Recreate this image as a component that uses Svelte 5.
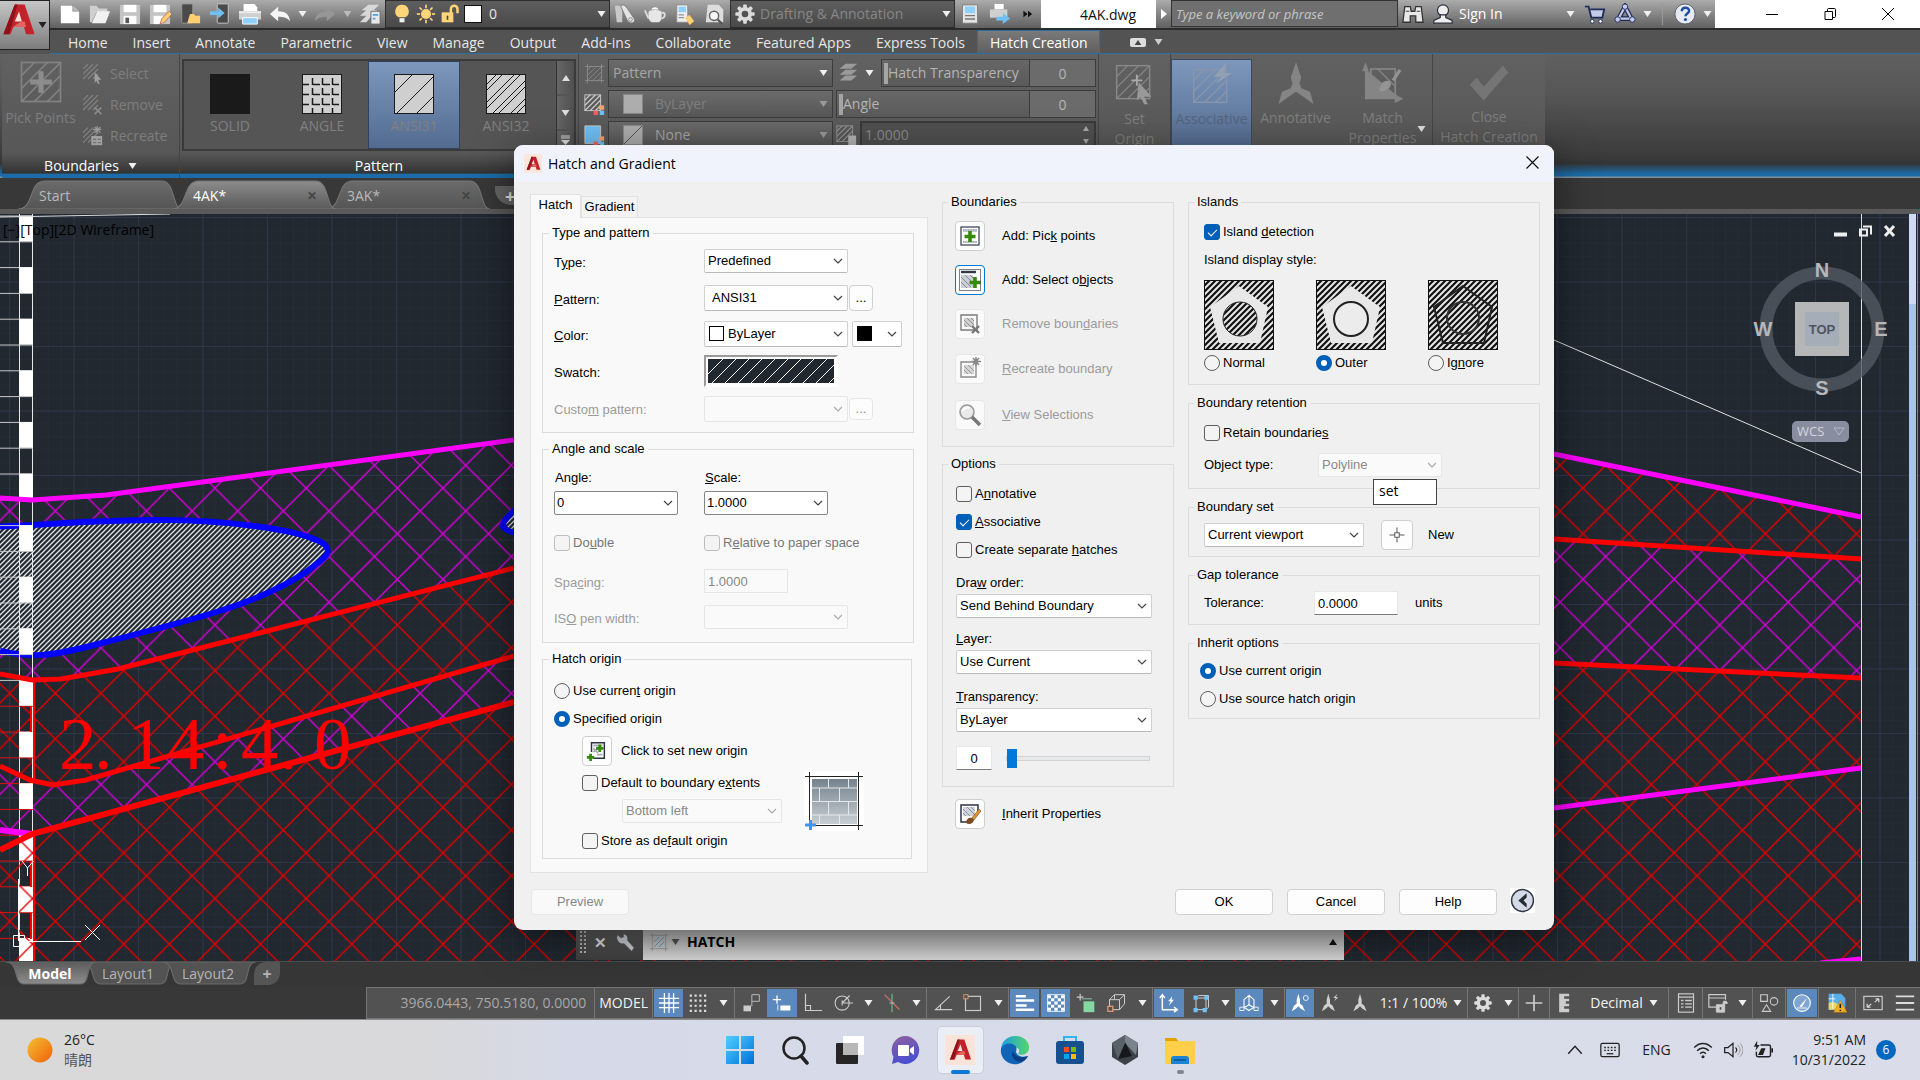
<script>
  const gearTeeth = Array.from({ length: 8 }, (_, i) => `<rect x="10" y="1.5" width="4" height="6" rx="1" transform="rotate(${i * 45} 12 12)"/>`).join('');
  const gear = `<g fill="#dcdcdc">${gearTeeth}</g><circle cx="12" cy="12" r="5.6" fill="none" stroke="#dcdcdc" stroke-width="4"/>`;
  const sunRays = Array.from({ length: 8 }, (_, i) => `<path d="M12 1v4" transform="rotate(${i * 45} 12 12)"/>`).join('');
  const diag = (c, w = 1) => `<path d="M3 9l6-6M3 15l12-12M3 21L21 3M9 21l12-12M15 21l6-6" stroke="${c}" stroke-width="${w}" fill="none"/>`;

  const icons = {
    doc: '<path d="M2 3h13l7 6v13H2z" fill="#fff"/><path d="M15 2v7h8z" fill="#bbb" stroke="#777" stroke-width=".6"/>',
    open: '<path d="M1 21V3h7l3 3h9v4H8L3 21z" fill="#cfcfcf"/><path d="M3 22L9 9h14l-5 13z" fill="#f1f1f1"/>',
    save: '<path d="M1 2h22v21H1z" fill="#c4c4c4"/><path d="M5 2h14v8H5z" fill="#fff"/><path d="M5 14h14v9H5z" fill="#fff"/><path d="M7 16h4v6H7z" fill="#555"/>',
    saveas: '<path d="M1 2h22v21H1z" fill="#c4c4c4"/><path d="M5 2h14v8H5z" fill="#fff"/><path d="M5 14h10v9H5z" fill="#fff"/><path d="M12 23l2-6 8-8 3 3-8 9z" fill="#ffcf70" stroke="#a55" stroke-width=".8"/>',
    mopen: '<rect x="3" y="1" width="12" height="21" rx="1" fill="#4a4a4a" stroke="#999"/><path d="M9 22l3-10h4l2 2h5v8z" fill="#ffcf70"/>',
    msave: '<rect x="9" y="1" width="12" height="21" rx="1" fill="#4a4a4a" stroke="#ccc"/><path d="M1 9h9V5l7 6-7 6v-4H1z" fill="#6fc0f5"/>',
    print: '<path d="M5 1h12l3 4v4H5z" fill="#fff"/><path d="M0 9h24v9H0z" fill="#d0d0d0"/><path d="M0 9h24v2H0z" fill="#eee"/><path d="M4 16h16v7H4z" fill="#8fd0ff" stroke="#fff"/>',
    undo: '<path d="M1 12L10 4v5c8 0 12 3 13 11-3-4-7-5-13-5v5z" fill="#f5f5f5"/>',
    redo: '<path d="M23 12L14 4v5C6 9 2 12 1 20c3-4 7-5 13-5v5z" fill="#969696"/>',
    layers: '<path d="M10 2h12l-6 6H3zM8 8h12l-6 6H1zM8 14h6l-6 7H1z" fill="#d8d8d8"/><path d="M13 9h10v14H13z" fill="#e8e8e8" stroke="#666"/><path d="M15 12h6v2h-6zM15 16h3v2h-3z" fill="#4aa3e0"/>',
    bulb: '<path d="M12 1a8 8 0 0 0-4 15h8A8 8 0 0 0 12 1z" fill="#ffd577"/><path d="M9 17h6v5H9z" fill="#eee"/>',
    sun: `<circle cx="12" cy="12" r="6" fill="#ffd577"/><g stroke="#ffd577" stroke-width="2">${sunRays}</g>`,
    lock: '<path d="M2 10h14v12H2z" fill="#ffd577"/><path d="M13 11V6a4 4 0 0 1 8 0v5" fill="none" stroke="#ffd577" stroke-width="3"/><path d="M8 14h2v5H8z" fill="#444"/>',
    paint: '<path d="M1 3h8v18H3z" fill="#c9c9c9"/><path d="M7 3c5-3 6 1 15 14 2 5-4 6-7 3z" fill="#e4e4e4" stroke="#777"/><circle cx="18" cy="18" r="2" fill="none" stroke="#888"/>',
    teapot: '<path d="M5 10c0-3 14-3 14 0 1 8-1 10-3 11H9c-3-1-5-4-4-11z" fill="#e6e6e6"/><path d="M5 17L1 8M19 11c5-2 5 5 0 6" stroke="#ddd" stroke-width="2" fill="none"/><path d="M8 7c2-3 6-3 8 0z" fill="#fff"/>',
    sheet: '<path d="M3 2h12v19H3z" fill="#eee" stroke="#888"/><path d="M5 4h8v6H5z" fill="#8fd0ff"/><path d="M5 13h6M5 16h6" stroke="#777"/><path d="M12 16l5-3 5 7-5 4z" fill="#ffcf70"/>',
    preview: '<path d="M4 2h12l5 5v14H2z" fill="#ddd"/><circle cx="11" cy="14" r="5" fill="#f8f8f8" stroke="#666" stroke-width="1.6"/><path d="M15 18l5 5" stroke="#555" stroke-width="2.4"/>',
    gear,
    calc: '<path d="M3 1h18v22H3z" fill="#e4e4e4" stroke="#777"/><path d="M6 3h12v8H6z" fill="#8fd0ff"/><path d="M6 14h12M6 18h12" stroke="#777" stroke-width="1.6"/>',
    plot: '<path d="M6 1h10v6H6z" fill="#fff"/><path d="M1 7h19v9H1z" fill="#d0d0d0"/><path d="M8 15h7v-4l8 6-8 6v-4H8z" fill="#6fc0f5"/>',
    more: '<path d="M1 4l10 8-10 8zM12 4l10 8-10 8z" fill="#111"/>',
    bino: '<path d="M3 4h6l1 5h4l1-5h6l2 17h-8v-7h-6v7H1z" fill="#e8e8e8" stroke="#333" stroke-width="1.4"/><path d="M4 9h4M16 9h4" stroke="#333"/>',
    user: '<circle cx="12" cy="8" r="6" fill="#eee" stroke="#2b2f3d" stroke-width="1.3"/><path d="M9 13h6v3l7 3v3H2v-3l7-3z" fill="#eee" stroke="#2b2f3d" stroke-width="1.3"/>',
    cart: '<path d="M1 4h4l3 12h12l2-9H7" fill="#c4cbe8" stroke="#1e2a5a" stroke-width="2"/><circle cx="9" cy="20" r="2" fill="#fff" stroke="#1e2a5a"/><circle cx="18" cy="20" r="2" fill="#fff" stroke="#1e2a5a"/>',
    a360: '<path d="M12 4l7 13H5z" fill="none" stroke="#1e2a5a" stroke-width="5"/><path d="M12 4l7 13H5z" fill="none" stroke="#c4cbe8" stroke-width="2.4"/><circle cx="12" cy="4" r="3" fill="#c4cbe8" stroke="#1e2a5a"/><circle cx="4" cy="18" r="3" fill="#c4cbe8" stroke="#1e2a5a"/><circle cx="20" cy="18" r="3" fill="#c4cbe8" stroke="#1e2a5a"/>',
    help: '<circle cx="12" cy="12" r="11" fill="#e8eaf2" stroke="#555b70"/><path d="M8.500 9c0-5 8-5 8-.5 0 3-4 3-4 6" stroke="#1d4fa0" stroke-width="2.600" fill="none"/><circle cx="12.500" cy="18" r="1.700" fill="#1d4fa0"/>',
    pickpoints: `<rect x="3" y="3" width="18" height="18" fill="none" stroke="#828282" stroke-width=".8"/>${diag('#828282', 0.8)}<path d="M12 7v10M7 12h10" stroke="#8c8c8c" stroke-width="2.400"/>`,
    rselect: `<g transform="translate(-3 -3)">${diag('#858585', 1.3)}</g><path d="M14 10l8 9h-4l2 5-2 0-2-4-2 3z" fill="#a0a0a0"/>`,
    rremove: `<g transform="translate(-3 -3)">${diag('#858585', 1.3)}</g><path d="M14 15l8 8M22 15l-8 8" stroke="#8c8c8c" stroke-width="2"/>`,
    rrecreate: `<g transform="translate(-3 -1)">${diag('#858585', 1.3)}</g><path d="M17 0v9M12 4h10M14 1l7 7M21 1l-7 7" stroke="#9a9a9a" stroke-width="1.400"/><path d="M10 12h13v11H10z" fill="#a0a0a0"/><path d="M12 16h4M12 20h4M18 16h3M18 20h3" stroke="#555"/>`,
    hatchtype: `<path d="M1 4h22M1 20h22M4 1v22M20 1v22" stroke="#8a8a8a"/>${diag('#8a8a8a', 1)}`,
    hatchcolor: `<g transform="translate(-2 -2)">${diag('#d0d0d0', 1.6)}<rect x="3" y="3" width="18" height="18" fill="none" stroke="#d0d0d0"/></g><path d="M17 13h6v5h-6z" fill="#f0a470"/><path d="M11 19h5v5h-5z" fill="#f06060"/><path d="M18 19h5v5h-5z" fill="#6fc0f5"/>`,
    bgcolor: '<path d="M1 1h18v20H1z" fill="#6fc0f5" stroke="#ccc"/><path d="M17 13h6v5h-6z" fill="#f0a470"/><path d="M11 19h5v5h-5z" fill="#f06060"/><path d="M18 19h5v5h-5z" fill="#6fc0f5"/>',
    stack: '<path d="M9 1h14l-7 6H2zM9 8h14l-7 6H2zM9 15h14l-7 6H2z" fill="#9a9a9a"/>',
    hatchscale: `<g transform="translate(-2 -2)">${diag('#999', 1.2)}<rect x="3" y="3" width="18" height="18" fill="none" stroke="#999"/></g><path d="M14 12h9v12H14z" fill="#b5b5b5"/>`,
    setorigin: `<rect x="2" y="2" width="18" height="18" fill="none" stroke="#888" stroke-width=".8"/><g transform="translate(-1 -1)">${diag('#888', 0.7)}</g><path d="M13 7v6M10 10h6" stroke="#aaa"/><path d="M14 11l7 8h-4l2 4h-2l-2-4-2 2z" fill="#999"/>`,
    assoc: `<rect x="2" y="4" width="18" height="18" fill="none" stroke="#8796ad" stroke-width=".8"/><g transform="translate(-1 1)">${diag('#8796ad', 0.8)}</g><path d="M20 0l-7 8h4l-3 4 9-6h-4z" fill="#93a0b4"/>`,
    annot: '<path d="M12 0l3 9-1 3 1 3 5 2 2 7-7-5-3-2-3 2-7 5 2-7 5-2 1-3-1-3z" fill="#858585"/>',
    match: `<path d="M2 4v17h20M2 1l-1.500 4h3zM23 21l-4-2v4z" fill="#858585" stroke="#858585" stroke-width=".6"/><rect x="5" y="4" width="14" height="15" fill="none" stroke="#858585"/><path d="M5 8l11 11M5 13l6 6M9 4l10 10" stroke="#858585" stroke-width=".7"/><path d="M10 17c0-5 3-7 6-6 2 3-2 6-6 6zM17 10l4-6 1.500 1-4 6z" fill="#949494"/>`,
    check: '<path d="M1 13l4-4 4 5L20 2l3 4L9 22z" fill="#757575"/>',
    grid: '<path d="M7 1v22M12 1v22M17 1v22M1 7h22M1 12h22M1 17h22" stroke="#fff" stroke-width="1.400"/>',
    dots: '<path d="M3 4h18M3 9.500h18M3 15h18M3 20.500h18" stroke="#ddd" stroke-width="2.400" stroke-dasharray="2.400 2.800"/>',
    infer: '<path d="M13 2h9v8h-9zM13 10v6" fill="none" stroke="#ccc"/><path d="M3 15h9v7H3z" fill="#ccc"/>',
    dyn: '<path d="M6 3v10M1 8h10" stroke="#fff" stroke-width="1.600"/><path d="M10 15h12v6H10z" fill="#fff"/><path d="M7 14v7" stroke="#fff"/>',
    ortho: '<path d="M3 1v20h20M3 15h6v6" fill="none" stroke="#ccc" stroke-width="1.400"/>',
    polar: '<circle cx="11" cy="12" r="8.500" fill="none" stroke="#ccc" stroke-width="1.300"/><path d="M11 12h13M11 12l9-9M11 9v6" stroke="#ccc" stroke-width="1.300" fill="none"/>',
    iso: '<path d="M12 1v22" stroke="#6bbf83" stroke-width="1.400"/><path d="M3 2l18 18" stroke="#d07070" stroke-width="1.400"/><path d="M9 12h6" stroke="#ccc"/>',
    otrack: '<path d="M20 4L3 20h20M9 14v6" fill="none" stroke="#ccc" stroke-width="1.400"/>',
    osnap: '<rect x="3" y="4" width="18" height="17" fill="none" stroke="#ccc" stroke-width="1.400"/><rect x="1" y="2" width="5" height="5" fill="#535353" stroke="#f0a070"/>',
    lw: '<path d="M1 4h12M1 9h22M1 15h13M1 20h22" stroke="#fff" stroke-width="3"/>',
    transp: '<rect x="2" y="2" width="20" height="20" fill="none" stroke="#fff"/><path d="M2 4.500h20M2 12h20M2 19.500h20" stroke="#fff" stroke-width="3.600" stroke-dasharray="4 4"/><path d="M6 8.200h16M6 15.800h16" stroke="#fff" stroke-width="3.600" stroke-dasharray="4 4"/>',
    selcyc: '<path d="M5 1v8M1 5h8" stroke="#ccc" stroke-width="1.400"/><path d="M7 7h12" stroke="#9ad8b4"/><path d="M9 10h13v13H9z" fill="#85d8a2"/>',
    osnap3: '<path d="M3 8l6-6h12v11l-6 7H3zM3 8h12v12M15 8l6-6M9 2v5" fill="none" stroke="#ccc" stroke-width="1.200"/><rect x="1" y="16" width="6" height="6" fill="#535353" stroke="#f0a070" stroke-width="1.400"/>',
    ducs: '<path d="M4 2v18h18M1 6l3-4 3 4M18 17l4 3-4 3" fill="none" stroke="#fff" stroke-width="1.700"/><path d="M16 4l-5 6h3l-2 5 6-7h-3z" fill="#fff"/>',
    filter: '<path d="M6 6h12v14H6zM6 6l3-3h12v14l-3 3" fill="none" stroke="#ccc" stroke-width="1.200"/><path d="M3 3h5v5H3zM16 3h5v5h-5zM3 18h5v5H3zM14 18h5v5h-5z" fill="#6fc0f5"/>',
    gizmo: '<path d="M12 2v12M12 14l-8 5M12 14l8 5M6 8l6-5 6 5v9l-6 4-6-4z" fill="none" stroke="#fff" stroke-width="1.300"/><path d="M1 17h5v4H1zM18 17h5v4h-5z" fill="#5b89bd" stroke="#fff"/>',
    av: '<path d="M10 1l2 7 0 5 3 2 3 7-5-3-3-3-3 3-5 3 3-7 3-2V8z" fill="#fff"/><circle cx="19" cy="6" r="3" fill="none" stroke="#fff"/>',
    av2: '<path d="M10 1l2 7 0 5 3 2 3 7-5-3-3-3-3 3-5 3 3-7 3-2V8z" fill="#d0d0d0"/><path d="M21 1l-5 5h3l-2 4 5-5h-3z" fill="#d0d0d0"/>',
    av3: '<path d="M12 1l2 7 0 5 3 2 3 7-5-3-3-3-3 3-5 3 3-7 3-2V8z" fill="#d0d0d0"/>',
    plus: '<path d="M12 2v20M2 12h20" stroke="#ccc" stroke-width="2"/>',
    ruler: '<path d="M5 1h12v3h-6v3h6v3h-4v3h4v3h-6v3h6v4H5z" fill="#ccc"/>',
    qp: '<rect x="3" y="1" width="18" height="22" fill="none" stroke="#ccc" stroke-width="1.400"/><path d="M3 5h18M6 9h3M6 13h3M6 17h3M11 9h8M11 13h8M11 17h8" stroke="#ccc" stroke-width="1.600"/>',
    lockui: '<path d="M10 17H1V2h20v6M1 6h20" fill="none" stroke="#ccc" stroke-width="1.400"/><path d="M10 14h10v9H10zM18 14v-3a3 3 0 0 1 5 0v2" fill="#ccc" stroke="#ccc"/><path d="M14 17h2v3h-2z" fill="#444"/>',
    isolate: '<path d="M2 2h8v8H2zM9 14l5 8H4z" fill="none" stroke="#ccc" stroke-width="1.300"/><circle cx="18" cy="10" r="4.500" fill="none" stroke="#ccc" stroke-width="1.300"/>',
    perf: '<circle cx="12" cy="12" r="10" fill="#7fa6d2" stroke="#fff" stroke-width="1.300"/><path d="M9 16l9-10-6 11z" fill="#fff"/><path d="M6 18h12" stroke="#fff"/>',
    warn: '<path d="M2 1h15l5 5v14H2z" fill="#58aee8"/><path d="M2 12c5-3 10 0 12 3v5H2z" fill="#e8d66a"/><path d="M7 1v18M2 7h8" stroke="#fff"/><path d="M16 9l8 14H8z" fill="#f5b021" stroke="#b07800" stroke-width=".6"/><path d="M16 13v5M16 20v1.500" stroke="#222" stroke-width="2"/>',
    clean: '<rect x="1" y="4" width="22" height="16" fill="none" stroke="#ccc" stroke-width="1.400"/><path d="M14 11l5-4M19 7h-4M19 7v4M10 13l-5 4M5 17h4M5 17v-4" stroke="#ddd" stroke-width="1.400"/>',
    burger: '<path d="M1 4h22M1 12h22M1 20h22" stroke="#ddd" stroke-width="2.200"/>',
    acad: '<path d="M1 22L9 1h7l7 21h-6l-1.500-5H8l-2 5z" fill="#c4222a"/><path d="M12 6l-3 7h5z" fill="#f6e4de"/><path d="M1 22L9 1h2L5 22z" fill="#8d1219"/><path d="M8 17c3-3 5-4 8-4l1 4z" fill="#e2675f"/>',
    addpick: '<rect x="3" y="3" width="18" height="18" fill="#fff" stroke="#333a4a" stroke-width="1.200"/><path d="M5 5h14v3H5zM5 17h14v2H5z" fill="#c3c8d2"/><path d="M5 6h14M5 18h14" stroke="#8a91a0" stroke-dasharray="1 1.500"/><path d="M12 7v11M6.500 12.500h11" stroke="#35890c" stroke-width="3.600"/>',
    addsel: '<path d="M3 4h15" stroke="#333a4a" stroke-width="2.400"/><path d="M3 7h12l1 4v9H3z" fill="#ccd0d6"/><path d="M3 9l10 10M3 14l6 6M7 7l9 9M12 7l5 5" stroke="#858c98"/><path d="M17 9v11M11.500 14.500h11" stroke="#35890c" stroke-width="3.600"/><rect x="1.500" y="1.500" width="21" height="21" fill="none" stroke="#000" stroke-dasharray="1 1"/>',
    rmb: '<path d="M3 3h16v15H3z" fill="#fafafa" stroke="#7c7c7c" stroke-width="1.400"/><path d="M6 6h10v9H6z" fill="#d0d0d0"/><path d="M6 8l7 7M6 12l3 3M9 6l7 7M13 6l3 3" stroke="#8f8f8f"/><path d="M14 14l7 7M21 14l-7 7" stroke="#777" stroke-width="2.400"/>',
    rcb: '<path d="M3 5h15v15H3z" fill="#fafafa" stroke="#8a8a8a" stroke-width="1.400"/><path d="M6 8h10v9H6z" fill="#d5d5d5"/><path d="M6 9l8 8M6 13l4 4M10 8l6 6" stroke="#999"/><path d="M18 0v9M14 4.500h9M15 1l6 7M21 1l-6 7" stroke="#888" stroke-width="1.500"/>',
    mag: '<circle cx="9" cy="9" r="7" fill="#e9e9e9" stroke="#999" stroke-width="1.600"/><path d="M5 8c1-3 4-4 6-3" stroke="#fff" stroke-width="2" fill="none"/><path d="M14 14l8 8" stroke="#777" stroke-width="3.600"/>',
    neworigin: '<path d="M8 20h12V3H6v10" fill="none" stroke="#2c3244" stroke-width="1.600"/><path d="M8 6l10 0M8 9l5 5M8 13l9-7M12 16h6" stroke="#a6adb8" stroke-width="2"/><path d="M15 5v8M11 9h8M5 15v8M1 19h8" stroke="#35890c" stroke-width="3"/>',
    inherit: '<path d="M10 20H3V3h17v9" fill="#fff" stroke="#2c3244" stroke-width="1.500"/><path d="M5 5h12v9H5z" fill="#cfd4dc"/><path d="M5 7l7 7M5 11l3 3M9 5l8 8M13 5l4 4" stroke="#8b93a2"/><path d="M14 16l7-9 2 2-7 9z" fill="#e09a30" stroke="#6b3f16" stroke-width=".6"/><path d="M8 21c0-4 3-6 6-5l2 2c-1 4-5 5-8 3z" fill="#7a4a22"/>',
    cross: '<path d="M12 2v20M2 12h20" stroke="#555" stroke-width="1.300"/><rect x="9" y="9" width="6" height="6" fill="#fff" stroke="#555" stroke-width="1.300"/>',
    back: '<rect width="24" height="24" fill="#fff"/><circle cx="12" cy="12" r="10.500" fill="#d5dbe6" stroke="#333a48" stroke-width="1.400"/><path d="M16 5l-8 7 8 7v-4l-3-3 3-3z" fill="#252a33"/>',
    wrench: '<path d="M3 3l4 4 3-1 0-4c5 1 6 5 5 8l8 9-3 4-9-9c-5 1-8-2-9-7z" fill="#d5d8e0" stroke="#555" stroke-width=".8"/>',
    hatchcmd: '<path d="M1 4h22M1 20h22M4 1v22M20 1v22" stroke="#999"/><path d="M6 18L18 6M6 12l6-6M12 18l6-6" stroke="#5fa5cc" stroke-width="1.200"/>',
    up: '<path d="M3 17l9-10 9 10" fill="none" stroke="#222" stroke-width="1.800"/>',
    kb: '<rect x="1" y="4" width="22" height="16" rx="2" fill="none" stroke="#222" stroke-width="1.500"/><path d="M5 9h14M5 12.500h14" stroke="#222" stroke-width="1.600" stroke-dasharray="2 2"/><path d="M8 16.500h8" stroke="#222" stroke-width="1.500"/>',
    wifi: '<path d="M1.500 9c6-6.500 15-6.500 21 0M5 13c4-4.500 10-4.500 14 0M8.500 16.500c2-2.500 5-2.500 7 0" fill="none" stroke="#222" stroke-width="1.700"/><circle cx="12" cy="20" r="1.800" fill="#222"/>',
    vol: '<path d="M2 9h4l6-5v16l-6-5H2z" fill="none" stroke="#222" stroke-width="1.500"/><path d="M15 9c2 2 2 4 0 6" fill="none" stroke="#222" stroke-width="1.400"/><path d="M17.500 6c4 4 4 8 0 12M20.500 4c4.500 5 4.500 11 0 16" fill="none" stroke="#999" stroke-width="1.200"/>',
    bat: '<path d="M9 6h10a2 2 0 0 1 2 2v10a2 2 0 0 1-2 2H6a2 2 0 0 1-2-2v-4" fill="none" stroke="#222" stroke-width="1.700"/><path d="M6 18l4-8h5l-3 8zM22 10h2v5h-2zM5 1L1 8h3l-1 5 5-7H5z" fill="#222"/>'
  };

  const fileTools = ['doc', 'open', 'save', 'saveas', 'mopen', 'msave', 'print', 'undo'];
  const menus = ['Home', 'Insert', 'Annotate', 'Parametric', 'View', 'Manage', 'Output', 'Add-ins', 'Collaborate', 'Featured Apps', 'Express Tools', 'Hatch Creation'];

  // Status bar groups: [icon, cell width, on, is text]; "v" is a drop-down arrow
  const status = [
    [['grid', 31, 1], ['dots', 28], ['v', 22]],
    [['infer', 31], ['dyn', 32, 1], ['ortho', 30], ['polar', 30], ['v', 20], ['iso', 28], ['v', 20]],
    [['otrack', 31], ['osnap', 30], ['v', 20]],
    [['lw', 31, 1], ['transp', 31, 1], ['selcyc', 30], ['osnap3', 31], ['v', 20]],
    [['ducs', 32, 1], ['filter', 31], ['v', 18], ['gizmo', 30, 1], ['v', 20]],
    [['av', 30, 1], ['av2', 30], ['av3', 30], ['1:1 / 100%', 92, 0, 1]],
    [['gear', 30], ['v', 20]],
    [['plus', 30]],
    [['ruler', 30], ['Decimal', 88, 0, 1]],
    [['qp', 33]],
    [['lockui', 29], ['v', 20]],
    [['isolate', 32]],
    [['perf', 32, 1]],
    [['warn', 36]],
    [['clean', 34], ['burger', 30]]
  ];

  const tick = 25.8;
  const blocks = Array.from({ length: 15 }, (_, i) => 215.6 + i * tick * 2);
  const ticks = Array.from({ length: 29 }, (_, i) => 216 + i * tick);
  const polygon = '35,6 64,27 56,63 15,63 6,27';

  let islandDetection = $state(true);
  let associative = $state(true);
  let island = $state('outer');
  let origin = $state('specified');
  let inheritOrigin = $state('current');
  let transparency = $state(0);
</script>

{#snippet ic(name, size = 22)}
  <svg class="ic" viewBox="0 0 24 24" width={size} height={size} aria-hidden="true">{@html icons[name]}</svg>
{/snippet}

{#snippet caret(color = '#f0f0f0')}
  <svg class="ic" viewBox="0 0 8 6" width="9" height="6" aria-hidden="true"><path d="M0 0h8L4 6z" fill={color} /></svg>
{/snippet}

{#snippet pick(id, value, cls = '', disabled = false)}
  <span class="sel {cls}">
    <select {id} {disabled} aria-label={id}><option>{value}</option></select>
    <svg viewBox="0 0 10 6" width="10" height="6" aria-hidden="true"><path d="M1 1l4 4 4-4" fill="none" stroke={disabled ? '#aaa' : '#444'} stroke-width="1.2" /></svg>
  </span>
{/snippet}

{#snippet tabShape(on)}
  <svg class="shape ftshape" viewBox="0 0 160 31" preserveAspectRatio="none" aria-hidden="true">
    <path d="M0 31C16 31 10 1 26 1H140C154 1 150 31 160 31z" fill={on ? 'url(#tab-on)' : 'url(#tab-off)'} stroke="#777" stroke-width="1" />
  </svg>
{/snippet}

{#snippet layoutShape(on)}
  <svg class="shape" viewBox="0 0 80 23" preserveAspectRatio="none" aria-hidden="true">
    <path d="M0 0C12 0 6 22 16 22H66C76 22 70 0 80 0z" fill={on ? 'url(#lay-on)' : '#535353'} stroke="#6b6b6b" stroke-width="1" />
  </svg>
{/snippet}

<div class="app">
  <header class="top">
    <button class="appbtn" aria-label="Application menu">
      {@render ic('acad', 34)}
      {@render caret('#222')}
    </button>
    <div class="title">
      {#each fileTools as t}<button class="tool" aria-label={t}>{@render ic(t)}</button>{/each}
      <button class="thin" aria-label="Undo list">{@render caret()}</button>
      <button class="tool" aria-label="redo">{@render ic('redo')}</button>
      <button class="thin" aria-label="Redo list">{@render caret('#bbb')}</button>
      <button class="tool" aria-label="Layer properties">{@render ic('layers')}</button>
      <button class="drop">
        {@render ic('bulb', 20)}{@render ic('sun', 20)}{@render ic('lock', 20)}
        <span class="white"></span><span class="grow">0</span>{@render caret()}
      </button>
      {#each ['paint', 'teapot', 'sheet', 'preview'] as t}<button class="tool" aria-label={t}>{@render ic(t)}</button>{/each}
      <button class="drop work">{@render ic('gear', 22)}<span class="grow">Drafting &amp; Annotation</span>{@render caret()}</button>
      <button class="tool" aria-label="Sheet set">{@render ic('calc', 20)}</button>
      <button class="tool" aria-label="Publish">{@render ic('plot')}</button>
      <button class="tool slim" aria-label="More tools">{@render ic('more', 10)}</button>
      <div class="doc">4AK.dwg</div>
      <span class="thin"><svg width="6" height="10" viewBox="0 0 6 10" aria-hidden="true"><path d="M0 0l6 5-6 5z" fill="#fff" /></svg></span>
      <input class="search" aria-label="Search" placeholder="Type a keyword or phrase" />
      <button class="tool" aria-label="Find">{@render ic('bino')}</button>
      <button class="tool" aria-label="Account">{@render ic('user')}</button>
      <button class="sign"><span>Sign In</span>{@render caret()}</button>
      <button class="tool" aria-label="Store">{@render ic('cart')}</button>
      <button class="tool" aria-label="Apps">{@render ic('a360')}</button>
      <button class="thin" aria-label="Apps list">{@render caret()}</button>
      <i class="rule"></i>
      <button class="tool" aria-label="Help">{@render ic('help')}</button>
      <button class="thin" aria-label="Help list">{@render caret()}</button>
      <div class="win">
        <button aria-label="Minimize"><svg width="12" height="12" viewBox="0 0 12 12"><path d="M0 6.500h12" stroke="#000" /></svg></button>
        <button aria-label="Restore"><svg width="12" height="12" viewBox="0 0 12 12"><path d="M1 3.500h7.500v8H1zM3.500 3V1.500a1 1 0 0 1 1-1h6a1 1 0 0 1 1 1v7a1 1 0 0 1-1 1h-2" fill="none" stroke="#000" /></svg></button>
        <button aria-label="Close"><svg width="12" height="12" viewBox="0 0 12 12"><path d="M0 0l12 12M12 0L0 12" stroke="#000" /></svg></button>
      </div>
    </div>
    <nav class="menus">
      {#each menus as m}<button class:on={m === 'Hatch Creation'}>{m}</button>{/each}
      <button class="mini" aria-label="Minimize ribbon"><span><svg width="8" height="5" viewBox="0 0 8 6"><path d="M4 0l4 6H0z" fill="#444" /></svg></span>{@render caret('#ccc')}</button>
    </nav>
  </header>

  <section class="ribbon" aria-label="Hatch creation tools">
    <div class="panel p-bound">
      <div class="pbody">
        <button class="big" disabled>{@render ic('pickpoints', 52)}<span>Pick Points</span></button>
        <div class="list">
          <button disabled>{@render ic('rselect', 20)}Select</button>
          <button disabled>{@render ic('rremove', 20)}Remove</button>
          <button disabled>{@render ic('rrecreate', 20)}Recreate</button>
        </div>
      </div>
      <div class="ptitle">Boundaries {@render caret()}</div>
    </div>
    <div class="panel p-pat">
      <div class="pbody">
        <div class="gallery">
          <button class="cell" disabled><svg width="40" height="40"><rect width="40" height="40" fill="#1a1a1a" /></svg>SOLID</button>
          <button class="cell" disabled><svg width="40" height="40"><rect x=".5" y=".5" width="39" height="39" fill="#cfcfcf" stroke="#1a1a1a" /><path d="M1 10.500h6M11 10.500h7M21 10.500h7M31 10.500h6M1 20.500h6M11 20.500h7M21 20.500h7M31 20.500h6M1 30.500h6M11 30.500h7M21 30.500h7M31 30.500h6M10.500 4v7M20.500 4v7M30.500 4v7M10.500 14v7M20.500 14v7M30.500 14v7M10.500 24v7M20.500 24v7M30.500 24v7M10.500 34v5M20.500 34v5M30.500 34v5" stroke="#1a1a1a" stroke-width="1.500" /></svg>ANGLE</button>
          <button class="cell on" disabled><svg width="40" height="40"><rect x=".5" y=".5" width="39" height="39" fill="#cfcfcf" stroke="#1a1a1a" /><path d="M1 18L18 1M3 39L39 3M23 39l16-16" stroke="#1a1a1a" /></svg>ANSI31</button>
          <button class="cell" disabled><svg width="40" height="40"><rect x=".5" y=".5" width="39" height="39" fill="#cfcfcf" stroke="#1a1a1a" /><path d="M1 10l9-9M1 16L16 1M1 28L28 1M1 34L34 1M7 39L39 7M13 39l26-26M25 39l14-14M31 39l8-8" stroke="#1a1a1a" /></svg>ANSI32</button>
          <div class="gscroll">
            <button aria-label="Up"><svg width="10" height="6" viewBox="0 0 8 6"><path d="M4 0l4 6H0z" fill="#ddd" /></svg></button>
            <button aria-label="Down">{@render caret('#ddd')}</button>
            <button class="last" aria-label="More"><svg width="9" height="10" viewBox="0 0 9 10"><path d="M0 1h9M0 3h9" stroke="#ddd" /><path d="M0 5h9L4.500 10z" fill="#ddd" /></svg></button>
          </div>
        </div>
      </div>
      <div class="ptitle">Pattern</div>
    </div>
    <div class="panel p-prop">
      <div class="prow">
        {@render ic('hatchtype', 21)}
        <button class="field w225"><span class="grow">Pattern</span>{@render caret()}</button>
        <span class="stack">{@render ic('stack', 20)}{@render caret()}</span>
        <label class="slide"><b></b><span class="grow">Hatch Transparency</span><input value="0" aria-label="Hatch transparency" /></label>
      </div>
      <div class="prow">
        {@render ic('hatchcolor', 21)}
        <button class="field w225 dim"><i class="sq"></i><span class="grow">ByLayer</span>{@render caret('#999')}</button>
        <label class="slide"><b></b><span class="grow">Angle</span><input value="0" aria-label="Hatch angle" /></label>
      </div>
      <div class="prow">
        {@render ic('bgcolor', 21)}
        <button class="field w225"><i class="sq none"></i><span class="grow">None</span>{@render caret('#999')}</button>
        {@render ic('hatchscale', 21)}
        <label class="scale"><input value="1.0000" aria-label="Hatch scale" /><svg width="8" height="18" viewBox="0 0 8 18" aria-hidden="true"><path d="M4 0l3 5H1zM1 13h6l-3 5z" fill="#aaa" /></svg></label>
      </div>
    </div>
    <div class="panel p-or"><button class="big" disabled>{@render ic('setorigin', 44)}<span>Set<br />Origin</span></button></div>
    <div class="panel p-opt">
      <button class="big on" disabled>{@render ic('assoc', 44)}<span>Associative</span></button>
      <button class="big" disabled>{@render ic('annot', 42)}<span>Annotative</span></button>
      <button class="big" disabled>{@render ic('match', 42)}<span>Match<br />Properties</span></button>
      <span class="arrow">{@render caret('#ddd')}</span>
    </div>
    <div class="panel p-close"><button class="big" disabled>{@render ic('check', 42)}<span>Close<br />Hatch Creation</span></button></div>
    <div class="rest"></div>
  </section>

  <nav class="files">
    <button class="ftab">{@render tabShape(false)}<span>Start</span></button>
    <button class="ftab on">{@render tabShape(true)}<span>4AK*</span><b>✕</b></button>
    <button class="ftab">{@render tabShape(false)}<span>3AK*</span><b>✕</b></button>
    <button class="fadd" aria-label="New tab">+</button>
  </nav>

  <main class="canvas">
    <svg class="drawing" viewBox="0 214 1920 747" preserveAspectRatio="xMinYMin slice" role="img" aria-label="Section drawing">
      <defs>
        <linearGradient id="tab-on" x1="0" x2="0" y1="0" y2="1"><stop offset="0" stop-color="#8c8c8c" /><stop offset="1" stop-color="#5a5a5a" /></linearGradient>
        <linearGradient id="tab-off" x1="0" x2="0" y1="0" y2="1"><stop offset="0" stop-color="#6b6b6b" /><stop offset="1" stop-color="#555" /></linearGradient>
        <linearGradient id="lay-on" x1="0" x2="0" y1="0" y2="1"><stop offset="0" stop-color="#5c5c5c" /><stop offset="1" stop-color="#8c8c8c" /></linearGradient>
        <pattern id="gmin" x="73.500" y="217" width="12.900" height="12.900" patternUnits="userSpaceOnUse"><path d="M0 0H13M0 0V13" stroke="#262c37" stroke-width="1.600" /></pattern>
        <pattern id="gmaj" x="73.500" y="217" width="64.500" height="64.500" patternUnits="userSpaceOnUse"><path d="M0 .5H65M.5 0V65" stroke="#2e3546" /></pattern>
        <pattern id="hm" x="55.100" y="510.700" width="45.600" height="45.600" patternUnits="userSpaceOnUse"><path d="M-2-2L48 48M48-2L-2 48M-2 2L2-2M44 48l4-4M44-2l4 4M-2 44l4 4" stroke="#d800dc" stroke-width="1.400" /></pattern>
        <pattern id="hr" x="55.100" y="510.700" width="45.600" height="45.600" patternUnits="userSpaceOnUse"><path d="M-2-2L48 48M48-2L-2 48M-2 2L2-2M44 48l4-4M44-2l4 4M-2 44l4 4" stroke="#e40000" stroke-width="1.400" /></pattern>
        <pattern id="hw" width="5" height="5" patternUnits="userSpaceOnUse"><path d="M-1 6L6-1M-1 1L1-1M4 6l2-2" stroke="#e3e7ea" stroke-width="1.300" /></pattern>
        <pattern id="hb" width="6" height="6" patternUnits="userSpaceOnUse"><rect width="6" height="6" fill="#e6e6e6" /><path d="M-1 7L7-1M-1 1L1-1M5 7l2-2" stroke="#111" stroke-width="2.200" /></pattern>
      </defs>
      <rect y="214" width="1920" height="747" fill="#212830" />
      <rect y="214" width="1920" height="747" fill="url(#gmin)" />
      <rect y="214" width="1920" height="747" fill="url(#gmaj)" />

      <path d="M0 498L32 500 106 495 514 440V568L118 669 61 679 32 680 0 674z" fill="url(#hm)" />
      <path d="M0 674L32 680 61 679 118 669 514 568V656L86 780 53 785 32 780 0 766z" fill="url(#hr)" />
      <path d="M0 766L32 780 53 785 86 780 514 656V702L32 834 0 830z" fill="url(#hm)" />
      <path d="M0 850L32 834 514 702 900 600V961H0z" fill="url(#hr)" />
      <path d="M1300 400L1554 454 1861 517V559L1300 522z" fill="url(#hr)" />
      <path d="M1300 522L1861 559V678L1300 650z" fill="url(#hm)" />
      <path d="M1300 650L1861 678V961H900V700z" fill="url(#hr)" />

      <path d="M0 526.500C60 524 90 520 163 520 215 520 300 528 324 544 332 552 328 556 306 572 260 603 200 618 102 643 50 657 30 658 0 651z" fill="#212830" />
      <path d="M0 526.500C60 524 90 520 163 520 215 520 300 528 324 544 332 552 328 556 306 572 260 603 200 618 102 643 50 657 30 658 0 651" fill="url(#hw)" stroke="#00f" stroke-width="6" />
      <path d="M530 500C515 508 503 520 503 525S512 533 530 536z" fill="url(#hw)" stroke="#00f" stroke-width="6" />

      <path d="M19.500 214V961M32.500 214V961" stroke="#e8e8e8" />
      {#each ticks as y}<path d="M0 {y}H33" stroke={y > 700 ? '#e01010' : '#c9c9c9'} />{/each}
      {#each blocks as y}<rect x="19" {y} width="14" height="25.800" fill="#fff" />{/each}
      <path d="M19 835h14v126H19z" fill="url(#hr)" />
      <path d="M34 680V780M34 836V961" stroke="#f00" stroke-width="2" />
      <path d="M31 706v26M31 861v26M31 913v26" stroke="#f00" stroke-width="2" />

      <g fill="none" stroke-width="6">
        <path d="M0 498L32 500 106 495 514 440M1554 454L1861 517" stroke="#f0f" stroke-width="5" />
        <path d="M0 830L32 834" stroke="#f0f" />
        <path d="M0 674L32 680 61 679 118 669 514 568M1554 539L1861 559" stroke="#f00" stroke-width="5" />
        <path d="M0 766L30 780 53 785 86 780 514 656M1554 663L1861 678" stroke="#f00" stroke-width="5" />
        <path d="M0 850L32 834 514 702" stroke="#f00" />
        <path d="M1554 808L1861 768M1820 963L1861 959" stroke="#f0f" stroke-width="5" />
      </g>
      <path d="M1861.500 214V961M1554 340L1861 473" stroke="#e0e0e0" fill="none" />
      <path d="M0 217L170 214" stroke="#ddd" />

      <text x="59 94 127 167 212 241 279 314" y="769" class="cad">2.14:4.0</text>
      <g fill="none" stroke="#fff">
        <path d="M13.500 935.500h11v11h-11zM18.500 879V941M24 941.500H81" />
        <path d="M85 925l15 15M100 925l-15 15M22 861l5.500 7 6-7M27.500 868v8" />
      </g>

      <circle cx="1822" cy="329" r="56" fill="none" stroke="#525963" stroke-width="13" opacity=".8" />
      <rect x="1795" y="302" width="54" height="54" fill="#b4b6b8" />
      <rect x="1805" y="312" width="34" height="34" fill="#a5adb8" />
      <text x="1822" y="334" class="cube">TOP</text>
      <g class="dir"><text x="1822" y="277">N</text><text x="1822" y="395">S</text><text x="1763" y="336">W</text><text x="1881" y="336">E</text></g>
      <rect x="1792" y="421" width="57" height="21" rx="5" fill="#898da0" />
      <text x="1797" y="436" class="wcs">WCS</text>
      <path d="M1834 428h10l-5 7z" fill="none" stroke="#b4b8c4" />
      <g fill="none" stroke="#eee" stroke-width="3">
        <path d="M1834 234.500h13" stroke-width="4" />
        <path d="M1863 226.500h8v8" stroke-width="2" /><path d="M1860 229.500h7v6h-7z" stroke-width="2" />
        <path d="M1885 226l9 10M1894 226l-9 10" />
      </g>
      <rect x="1909" y="214" width="7" height="747" fill="#a9c3ec" /><rect x="1909" y="214" width="7" height="90" fill="#cfdcf3" /><rect x="1917" y="214" width="1" height="747" fill="#3a9cd8" />
    </svg>
    <div class="vp">[−][Top][2D Wireframe]</div>
    <div class="cmd">
      <div class="grip"><svg width="6" height="22" aria-hidden="true"><path d="M1 0v22M5 0v22" stroke="#bbb" stroke-width="2" stroke-dasharray="2 2" /></svg><b>✕</b>{@render ic('wrench', 20)}</div>
      <div class="line">{@render ic('hatchcmd', 20)}{@render caret('#555')}<input value="HATCH" aria-label="Command" /><svg width="10" height="6" viewBox="0 0 8 6" aria-hidden="true"><path d="M4 0l4 6H0z" fill="#111" /></svg></div>
    </div>
  </main>

  <nav class="layouts">
    <button class="on">{@render layoutShape(true)}<span>Model</span></button>
    <button>{@render layoutShape(false)}<span>Layout1</span></button>
    <button>{@render layoutShape(false)}<span>Layout2</span></button>
    <button class="ladd" aria-label="New layout">+</button>
  </nav>

  <footer class="status">
    <div class="group coords">3966.0443, 750.5180, 0.0000</div>
    <div class="group model"><button>MODEL</button></div>
    {#each status as g}
      <div class="group">
        {#each g as [name, w, on, txt]}
          <button class:on={on} style:width="{w}px" aria-label={name}>
            {#if txt}<span>{name}</span>{@render caret()}{:else if name === 'v'}{@render caret()}{:else}{@render ic(name, name === 'dots' || name === 'grid' ? 22 : 20)}{/if}
          </button>
        {/each}
      </div>
    {/each}
  </footer>

  <footer class="taskbar">
    <div class="weather">
      <svg width="26" height="26" viewBox="0 0 26 26" aria-hidden="true"><defs><linearGradient id="sun" x1="0" y1="0" x2="1" y2="1"><stop offset="0" stop-color="#f2c230" /><stop offset="1" stop-color="#f2600c" /></linearGradient></defs><circle cx="13" cy="13" r="12.500" fill="url(#sun)" /></svg>
      <div><div>26°C</div><div class="sub">晴朗</div></div>
    </div>
    <div class="apps">
      <button aria-label="Start"><svg width="30" height="30"><defs><linearGradient id="wn" x1="0" y1="0" x2="1" y2="1"><stop offset="0" stop-color="#4fd0ff" /><stop offset="1" stop-color="#0070d8" /></linearGradient></defs><path d="M1 1h13v13H1zM16 1h13v13H16zM1 16h13v13H1zM16 16h13v13H16z" fill="url(#wn)" /></svg></button>
      <button aria-label="Search"><svg width="30" height="30"><circle cx="14" cy="13" r="10.500" fill="none" stroke="#222" stroke-width="2.500" /><path d="M21 21l6 7" stroke="#222" stroke-width="3.500" stroke-linecap="round" /></svg></button>
      <button aria-label="Task view"><svg width="30" height="30"><rect x="1" y="8" width="22" height="21" rx="1" fill="#262626" /><rect x="8" y="1" width="21" height="19" rx="1" fill="#fff" /><rect x="8" y="8" width="15" height="12" fill="#b8b8b8" /></svg></button>
      <button aria-label="Chat"><svg width="30" height="30"><defs><linearGradient id="ct" x1="0" y1="0" x2=".3" y2="1"><stop offset="0" stop-color="#8f5f9f" /><stop offset="1" stop-color="#4a4fd0" /></linearGradient></defs><path d="M15 1a14 14 0 1 1-7 26l-6 2 1.500-7A14 14 0 0 1 15 1z" fill="url(#ct)" /><rect x="8" y="10" width="11" height="11" rx="1" fill="#fff" /><path d="M20 14l4-3v9l-4-3z" fill="#fff" /></svg></button>
      <button class="on" aria-label="AutoCAD"><svg width="30" height="30"><rect width="30" height="30" fill="#fae3d8" /><svg x="4" y="2" width="23" height="26" viewBox="0 0 24 24">{@html icons.acad}</svg></svg></button>
      <button aria-label="Edge"><svg width="30" height="30"><defs><linearGradient id="eg" x1="0" x2="1" y1="0" y2="0"><stop offset="0" stop-color="#1b9de2" /><stop offset="1" stop-color="#55d66a" /></linearGradient></defs><path d="M1 15C1 6 8 1 15 1c9 0 15 6 14 13-1 5-7 7-11 5 2-2 2-6-3-7C9 11 3 14 1 20z" fill="url(#eg)" /><path d="M1 14c2-5 9-7 13-4 4 2 2 5 2 7 1 4 7 6 12 4-3 6-9 9-15 8C5 28 0 21 1 14z" fill="#1064b8" /><path d="M13 16c-3 5 1 11 8 11 3-1 6-4 7-6-5 2-13 2-15-5z" fill="#0a3f86" /></svg></button>
      <button aria-label="Store"><svg width="30" height="30"><path d="M9 7V2h12v5" fill="none" stroke="#2fb4ee" stroke-width="2" /><rect x="1" y="6" width="28" height="23" rx="3" fill="#16508f" /><path d="M9 12h5v5H9z" fill="#f25022" /><path d="M16 12h5v5h-5z" fill="#7fba00" /><path d="M9 19h5v5H9z" fill="#00a4ef" /><path d="M16 19h5v5h-5z" fill="#ffb900" /></svg></button>
      <button aria-label="Modeler"><svg width="30" height="30"><path d="M15 0l13 8v14l-13 8L2 22V8z" fill="#3d4248" /><path d="M15 0l13 8-2 12L15 8z" fill="#7b848c" /><path d="M15 7l7 14-14 3z" fill="#15181c" /><path d="M2 8l13-8v8L8 24z" fill="#5a6269" /></svg></button>
      <button class="open" aria-label="Files"><svg width="30" height="30"><path d="M0 3h11l3 4H0z" fill="#e0a200" /><path d="M0 6h30v22a1 1 0 0 1-1 1H1a1 1 0 0 1-1-1z" fill="#ffcf4a" /><path d="M6 29v-5a3 3 0 0 1 3-3h12a3 3 0 0 1 3 3v5z" fill="#1c84d4" /><path d="M9 25h12" stroke="#0a4f92" stroke-width="1.500" /></svg></button>
    </div>
    <div class="tray">
      <span class="chev">{@render ic('up', 18)}</span>{@render ic('kb', 20)}<span class="eng">ENG</span>{@render ic('wifi', 20)}{@render ic('vol', 20)}{@render ic('bat', 20)}
      <div class="clock"><div>9:51 AM</div><div>10/31/2022</div></div>
      <span class="badge">6</span>
    </div>
  </footer>

  <div class="dialog" role="dialog" aria-labelledby="dlg-title">
    <div class="dtitle">
      <span class="dicon">{@render ic('acad', 15)}</span>
      <h1 id="dlg-title">Hatch and Gradient</h1>
      <button aria-label="Close dialog"><svg width="13" height="13" viewBox="0 0 13 13"><path d="M.5.500l12 12M12.500.500l-12 12" stroke="#111" stroke-width="1.200" /></svg></button>
    </div>
    <div class="dmain">
      <div class="left">
        <div class="tabs" role="tablist"><button class="on" role="tab" aria-selected="true">Hatch</button><button role="tab" aria-selected="false">Gradient</button></div>
        <div class="tabpane">
          <fieldset class="f-type">
            <legend>Type and pattern</legend>
            <label for="type">T<u>y</u>pe:</label><div>{@render pick('type', 'Predefined', 'w144')}</div>
            <label for="pattern"><u>P</u>attern:</label><div>{@render pick('pattern', 'ANSI31', 'w144 tall ind')}<button class="dots">...</button></div>
            <label for="color"><u>C</u>olor:</label>
            <div class="wide"><span class="chipwrap"><i class="chip"></i>{@render pick('color', 'ByLayer', 'w144 tall chipped')}</span><span class="chipwrap"><i class="chip black"></i>{@render pick('background', '', 'w50 tall')}</span></div>
            <span class="lab">Swatch:</span>
            <div><button class="swatch" aria-label="Swatch"><svg viewBox="0 0 126 24" width="126" height="24"><rect width="126" height="24" fill="#212830" />{#each Array(12) as _, i}<path d="M{i * 13 - 9} 24l24-24" stroke="#fff" />{/each}</svg></button></div>
            <label for="custom" class="off">Custo<u>m</u> pattern:</label><div>{@render pick('custom', '', 'w144 tall', true)}<button class="dots short" disabled>...</button></div>
          </fieldset>
          <fieldset class="f-angle">
            <legend>Angle and scale</legend>
            <label for="angle">An<u>g</u>le:</label><label for="scale"><u>S</u>cale:</label>
            <div>{@render pick('angle', '0', 'w124 combo')}</div><div>{@render pick('scale', '1.0000', 'w124 combo')}</div>
            <label class="check off"><input type="checkbox" disabled /><span>Do<u>u</u>ble</span></label><label class="check off"><input type="checkbox" disabled /><span>R<u>e</u>lative to paper space</span></label>
            <label for="spacing" class="off low4">Spa<u>c</u>ing:</label><div><input id="spacing" class="text w84" value="1.0000" disabled /></div>
            <label for="iso" class="off low4">IS<u>O</u> pen width:</label><div>{@render pick('iso', '', 'w144', true)}</div>
          </fieldset>
          <fieldset class="f-origin">
            <legend>Hatch origin</legend>
            <label class="check r28"><input type="radio" name="origin" value="current" bind:group={origin} /><span>Use curren<u>t</u> origin</span></label>
            <label class="check r28"><input type="radio" name="origin" value="specified" bind:group={origin} />Specified origin</label>
            <div class="sub-or">
              <div>
                <div class="r36"><button class="ibtn" aria-label="Set new origin">{@render ic('neworigin')}</button><span>Click to set new origin</span></div>
                <label class="check r28"><input type="checkbox" /><span>Default to boundary e<u>x</u>tents</span></label>
                <div class="r28 ind40">{@render pick('extent', 'Bottom left', 'w160', true)}</div>
                <label class="check r32"><input type="checkbox" /><span>Store as de<u>f</u>ault origin</span></label>
              </div>
              <svg class="brick" width="60" height="60" viewBox="0 0 60 60" aria-hidden="true">
                <defs><linearGradient id="bk" x1="0" x2="0" y1="0" y2="1"><stop offset="0" stop-color="#75828d" /><stop offset="1" stop-color="#c8cfd3" /></linearGradient></defs>
                <rect width="60" height="60" fill="#fff" /><rect x="8" y="8" width="45" height="45" fill="url(#bk)" />
                <path d="M8 17h45M8 30.500h45M8 44h45M24.500 8v9M44.500 8v9M15.500 17v13M35.500 17v13M24.500 31v13M44.500 31v13M15.500 44v9M35.500 44v9" stroke="#e6e9ec" />
                <path d="M5.500 1v49M1 5.500h58M54.500 1v58M12 54.500h47" stroke="#222" /><path d="M6.500 49v10M1 54h11" stroke="#3b95f5" stroke-width="3" />
              </svg>
            </div>
          </fieldset>
        </div>
      </div>
      <div class="mid">
        <fieldset class="f-bound">
          <legend>Boundaries</legend>
          <div><button class="ibtn" aria-label="Pick points">{@render ic('addpick', 24)}</button><span>Add: Pic<u>k</u> points</span></div>
          <div><button class="ibtn focus" aria-label="Select objects">{@render ic('addsel', 24)}</button><span>Add: Select o<u>b</u>jects</span></div>
          <div class="off"><button class="ibtn" disabled aria-label="Remove boundaries">{@render ic('rmb', 24)}</button><span>Remove boun<u>d</u>aries</span></div>
          <div class="off"><button class="ibtn" disabled aria-label="Recreate boundary">{@render ic('rcb', 24)}</button><span><u>R</u>ecreate boundary</span></div>
          <div class="off"><button class="ibtn" disabled aria-label="View selections">{@render ic('mag', 24)}</button><span><u>V</u>iew Selections</span></div>
        </fieldset>
        <fieldset class="f-opt">
          <legend>Options</legend>
          <label class="check"><input type="checkbox" /><span>A<u>n</u>notative</span></label>
          <label class="check"><input type="checkbox" bind:checked={associative} /><span><u>A</u>ssociative</span></label>
          <label class="check"><input type="checkbox" /><span>Create separate <u>h</u>atches</span></label>
          <label class="low" for="order">Dra<u>w</u> order:</label>{@render pick('order', 'Send Behind Boundary', 'w196')}
          <label class="low" for="layer"><u>L</u>ayer:</label>{@render pick('layer', 'Use Current', 'w196')}
          <label class="low" for="transparency"><u>T</u>ransparency:</label>{@render pick('transparency', 'ByLayer', 'w196')}
          <div class="range"><input class="text w36" bind:value={transparency} aria-label="Transparency value" /><input type="range" min="0" max="90" bind:value={transparency} aria-label="Transparency" /></div>
        </fieldset>
        <div class="inherit"><button class="ibtn" aria-label="Inherit">{@render ic('inherit', 24)}</button><span><u>I</u>nherit Properties</span></div>
      </div>
      <div class="right">
        <fieldset class="f-isl">
          <legend>Islands</legend>
          <label class="check r28"><input type="checkbox" bind:checked={islandDetection} /><span>Island <u>d</u>etection</span></label>
          <div class="r28">Island display style:</div>
          <div class="isl">
            <label><svg width="70" height="70"><rect width="70" height="70" fill="url(#hb)" stroke="#111" stroke-width="2" /><polygon points={polygon} fill="#e8e8e8" /><circle cx="36" cy="39" r="17" fill="url(#hb)" stroke="#222" /></svg><span class="check"><input type="radio" name="island" value="normal" bind:group={island} />Normal</span></label>
            <label><svg width="70" height="70"><rect width="70" height="70" fill="url(#hb)" stroke="#111" stroke-width="2" /><polygon points={polygon} fill="#e8e8e8" /><circle cx="35" cy="39" r="17" fill="#ececec" stroke="#222" stroke-width="2" /></svg><span class="check"><input type="radio" name="island" value="outer" bind:group={island} />Outer</span></label>
            <label><svg width="70" height="70"><rect width="70" height="70" fill="url(#hb)" stroke="#111" stroke-width="2" /><polygon points={polygon} fill="none" stroke="#222" stroke-width="2" /><circle cx="35" cy="38" r="16" fill="none" stroke="#333" stroke-width="2" /></svg><span class="check"><input type="radio" name="island" value="ignore" bind:group={island} /><span>Ig<u>n</u>ore</span></span></label>
          </div>
        </fieldset>
        <fieldset class="f-ret">
          <legend>Boundary retention</legend>
          <label class="check r28"><input type="checkbox" /><span>Retain boundarie<u>s</u></span></label>
          <div class="r36"><label class="w114" for="object">Object type:</label>{@render pick('object', 'Polyline', 'w124', true)}</div>
          <div class="tip">set</div>
        </fieldset>
        <fieldset class="f-one">
          <legend>Boundary set</legend>
          <div class="r36">{@render pick('set', 'Current viewport', 'w160')}<button class="ibtn new" aria-label="New set">{@render ic('cross', 18)}</button><span>New</span></div>
        </fieldset>
        <fieldset class="f-one">
          <legend>Gap tolerance</legend>
          <div class="r36"><label class="w110" for="tol">Tolerance:</label><input id="tol" class="text w84" value="0.0000" /><span class="units">units</span></div>
        </fieldset>
        <fieldset class="f-inh">
          <legend>Inherit options</legend>
          <label class="check r28"><input type="radio" name="inherit" value="current" bind:group={inheritOrigin} />Use current origin</label>
          <label class="check r28"><input type="radio" name="inherit" value="source" bind:group={inheritOrigin} />Use source hatch origin</label>
        </fieldset>
      </div>
    </div>
    <div class="dfoot">
      <button disabled>Preview</button><span class="grow"></span>
      <button>OK</button><button>Cancel</button><button>Help</button><button class="less" aria-label="Fewer options">{@render ic('back', 25)}</button>
    </div>
  </div>
</div>

<style>
  :global(body) { margin: 0; background: #383838; }
  * { box-sizing: border-box; }
  .app { position: relative; display: flex; flex-direction: column; min-height: 100vh; overflow: hidden; font: 14px/20px "Open Sans", "Noto Sans", "Noto Sans CJK SC", sans-serif; color: #e6e6e6; }
  button, input, select { font: inherit; color: inherit; margin: 0; }
  button { padding: 0; border: 0; background: none; white-space: nowrap; }
  .ic { flex: none; display: block; }
  .grow { flex: 1; text-align: left; }

  .top { display: grid; grid-template-columns: 50px 1fr; grid-template-rows: 30px 24px; background: #535353; }
  .appbtn { grid-row: 1 / 3; height: 50px; display: flex; align-items: center; justify-content: center; gap: 2px; padding-bottom: 10px; background: linear-gradient(#c6c6c6, #7d7d7d); border: 1px solid #222; border-left: 0; }
  .appbtn .ic:last-child { margin-top: 10px; }
  .title { display: flex; align-items: stretch; padding-left: 5px; background: linear-gradient(#ababab, #606060); border-bottom: 2px solid #2b2b2b; min-width: 0; }
  .tool { width: 30px; display: grid; place-items: center; flex: none; }
  .slim { width: 26px; }
  .thin { width: 15px; display: grid; place-items: center; flex: none; }
  .drop { flex: 0 1 225px; display: flex; align-items: center; gap: 4px; padding: 0 3px 0 6px; background: linear-gradient(#5e5e5e, #494949); border: 1px solid #2d2d2d; }
  .white { width: 18px; height: 18px; background: #fff; border: 1px solid #111; margin-right: 3px; }
  .work { padding-left: 3px; color: #878787; }
  .doc { width: 115px; flex: none; padding-right: 20px; background: #fff; color: #111; text-align: right; line-height: 29px; }
  .search { flex: 1 1 224px; min-width: 80px; height: 27px; padding: 0 4px; background: #6f6f6f; border: 1px solid #333; font-style: italic; font-size: 13px; }
  .search::placeholder { color: #c6c6c6; }
  .sign { width: 122px; flex: none; display: flex; align-items: center; justify-content: space-between; padding: 0 5px 0 1px; color: #fff; }
  .rule { width: 1px; margin: 3px 7px; background: #999; }
  .win { width: 205px; flex: none; display: flex; justify-content: flex-end; padding-right: 3px; background: #fff; }
  .win button { width: 58px; display: grid; place-items: center; }
  .menus { display: flex; padding-left: 5px; background: #535353; border-bottom: 1px solid #2a6f9e; }
  .menus button { padding: 0 11px 0 12px; border: 1px solid transparent; border-bottom: 0; line-height: 23px; }
  .menus button.on { background: linear-gradient(#7a7a7a, #5f5f5f); border-color: #2a6f9e; color: #fff; }
  .menus .mini { display: flex; align-items: center; gap: 8px; padding-left: 29px; }
  .mini span { width: 16px; height: 9px; display: grid; place-items: center; background: #ddd; border-radius: 2px; }

  .ribbon { display: flex; height: 124px; padding-left: 2px; background: linear-gradient(#606060 0%, #575757 30%, #3a3a3a 84%, #343434 88%, #1b6ca8 97%, #1b6ca8 98%, #9a9a9a 100%); color: #7e7e7e; overflow: hidden; }
  .panel { flex: none; display: flex; flex-direction: column; border-right: 1px solid #454545; background: linear-gradient(#616161, #575757 80%, #333 96%, #1b6ca8 97%); }
  .pbody { height: 101px; display: flex; }
  .ptitle { height: 23px; line-height: 22px; color: #fff; display: flex; align-items: center; justify-content: center; gap: 9px; padding-bottom: 2px; }
  .big { display: flex; flex-direction: column; align-items: center; line-height: 20px; color: inherit; padding-top: 6px; gap: 2px; }
  .big.on { background: linear-gradient(#7d97bd, #536b90); color: #55647e; border: 1px solid #3b4a63; }
  .p-bound { width: 178px; }
  .p-bound .big { width: 77px; padding-top: 2px; gap: 0; }
  .list { display: flex; flex-direction: column; padding: 6px 0 0 4px; }
  .list button { height: 31px; display: flex; align-items: center; gap: 7px; color: inherit; padding-bottom: 3px; }
  .p-pat { width: 399px; }
  .gallery { display: flex; flex: 1; margin: 5px 2px 4px; border: 2px solid #3a3a3a; background: #555; }
  .cell { width: 92px; flex: none; display: flex; flex-direction: column; align-items: center; gap: 2px; padding-top: 13px; color: #808080; }
  .cell.on { background: linear-gradient(#7d97bd, #536b90); border: 1px solid #33415c; padding-top: 12px; }
  .gscroll { width: 18px; margin-left: auto; display: flex; flex-direction: column; gap: 2px; border-left: 1px solid #333; }
  .gscroll button { flex: 1; display: grid; place-items: center; background: linear-gradient(90deg, #666, #505050); }
  .gscroll .last { flex: 0 0 18px; }
  .p-prop { width: 520px; padding: 5px 2px 0 5px; gap: 3px; }
  .prow { display: flex; align-items: center; gap: 3px; height: 28px; }
  .field { height: 28px; display: flex; align-items: center; gap: 12px; padding: 0 4px; border: 1px solid #3c3c3c; background: linear-gradient(#6b6b6b, #575757); color: #a6a6a6; }
  .w225 { width: 225px; }
  .dim { color: #7e7e7e; }
  .sq { width: 20px; height: 20px; margin-left: 10px; background: #adadad; border: 1px solid #888; }
  .none { background: linear-gradient(135deg, #adadad 48%, #555 48%, #555 52%, #adadad 52%); }
  .stack { width: 42px; display: flex; align-items: center; gap: 7px; padding-left: 2px; }
  .slide { flex: 1; height: 28px; display: flex; align-items: center; border: 1px solid #3c3c3c; background: linear-gradient(#676767, #5a5a5a); color: #b5b5b5; }
  .slide b { width: 4px; height: 21px; margin-left: 2px; background: #a5a5a5; }
  .slide input { width: 66px; height: 26px; border: 0; border-left: 1px solid #3c3c3c; background: #6b6b6b; text-align: center; }
  .scale { flex: 1; height: 28px; display: flex; align-items: center; padding-right: 4px; background: #505050; border: 2px solid #3a3a3a; color: #8a8a8a; }
  .scale input { flex: 1; min-width: 0; padding: 0 3px; border: 0; background: none; }
  .p-or { width: 72px; align-items: center; }
  .p-opt { width: 262px; position: relative; flex-direction: row; padding-top: 5px; }
  .p-opt .big { width: 87px; padding-top: 3px; gap: 4px; }
  .p-opt .big.on { width: 81px; height: 92px; padding-top: 2px; gap: 3px; }
  .arrow { position: absolute; right: 6px; top: 72px; }
  .p-close { width: 112px; align-items: center; border: 0; }
  .p-or .big, .p-close .big { padding-top: 8px; gap: 3px; }
  .rest { flex: 1; }

  .files { display: flex; height: 36px; padding: 2px 0 0 14px; background: #383838; border-bottom: 5px solid #5a5a5a; }
  .ftab { position: relative; width: 154px; display: flex; align-items: center; justify-content: space-between; padding: 2px 5px 0 25px; color: #b9b9b9; }
  .ftab span, .ftab b { position: relative; }
  .ftab.on { color: #fff; z-index: 1; }
  .ftab b { font-size: 12px; color: #444; }
  .shape { position: absolute; top: 0; left: -6px; width: calc(100% + 14px); height: 100%; }
  .ftshape { left: 4px; width: calc(100% + 10px); }
  .fadd { width: 50px; margin: 6px 0 4px 19px; padding: 0 10px; background: #666; border-radius: 0 0 0 16px; font-weight: 700; font-size: 18px; line-height: 18px; text-align: left; }

  .canvas { position: relative; flex: 1; min-height: 400px; background: #212830; overflow: hidden; }
  .drawing { position: absolute; inset: 0; width: 100%; height: 100%; }
  .cad { font: 75px "Liberation Serif", serif; fill: #f00; }
  .cube { font: bold 13px "Liberation Sans", sans-serif; fill: #4d5563; text-anchor: middle; }
  .dir { font: bold 20px "Liberation Sans", sans-serif; fill: #b5b7ba; text-anchor: middle; }
  .wcs { font: 13px "Open Sans", sans-serif; fill: #d3d6de; }
  .vp { position: relative; padding: 5px 3px; color: #000; line-height: 22px; }
  .cmd { position: absolute; left: 30%; right: 30%; bottom: 1px; height: 36px; display: flex; }
  .grip { width: 67px; display: flex; align-items: center; gap: 8px; padding-left: 4px; background: linear-gradient(#666, #404040); }
  .grip b { font-size: 15px; }
  .line { flex: 1; display: flex; align-items: center; gap: 2px; padding: 0 6px; background: linear-gradient(#b0b0b0, #dcdcdc); color: #000; }
  .line input { flex: 1; border: 0; background: none; padding: 0 0 0 5px; font-weight: 700; font-size: 14px; }

  .layouts { display: flex; height: 26px; padding-left: 12px; background: #363636; border-top: 1px solid #4d4d4d; }
  .layouts button { position: relative; width: 80px; height: 23px; line-height: 20px; color: #b5b5b5; }
  .layouts button span { position: relative; }
  .layouts .on { color: #fff; font-weight: 700; z-index: 1; width: 76px; }
  .layouts .ladd { width: 26px; margin-left: 6px; background: #555; border-radius: 12px 0 12px 0; font-weight: 700; font-size: 16px; }
  .status { display: flex; justify-content: flex-end; height: 33px; background: #383838; border-bottom: 1px solid #8a8a8a; }
  .group { display: flex; align-items: center; padding: 1px 0; background: #525252; border: 1px solid #757575; border-right: 0; }
  .group button { height: 28px; display: flex; align-items: center; justify-content: center; gap: 6px; color: #f4f4f4; }
  .group button.on { background: #5b89bd; border-left: 1px solid #525252; border-right: 1px solid #525252; }
  .coords { width: 228px; justify-content: flex-end; padding-right: 8px; color: #a8a8a8; }
  .model { padding: 0 4px; }

  .taskbar { display: grid; grid-template-columns: 1fr auto 1fr; align-items: center; height: 60px; background: linear-gradient(90deg, #d9d9da 0%, #d9d9db 22%, #d6dae8 30%, #dadde9 100%); color: #222; }
  .weather { display: flex; align-items: center; gap: 11px; padding-left: 27px; }
  .sub { color: #555; }
  .apps { display: flex; }
  .apps button { position: relative; width: 55px; height: 60px; display: grid; place-items: center; }
  .apps .on::before { content: ""; position: absolute; inset: 6px 4px; background: #eceef6; border: 1px solid #c9cddc; border-radius: 5px; }
  .apps svg { position: relative; }
  .apps .on::after { content: ""; position: absolute; left: 18px; right: 18px; bottom: 6px; height: 4px; border-radius: 2px; background: #0a78d4; }
  .apps .open::after { content: ""; position: absolute; left: 24px; right: 24px; bottom: 6px; height: 4px; border-radius: 2px; background: #808590; }
  .tray { display: flex; align-items: center; justify-content: flex-end; gap: 10px; padding-right: 24px; }
  .chev { margin-right: 6px; }
  .eng { margin: 0 12px; }
  .clock { text-align: right; margin-left: 9px; }
  .badge { width: 20px; height: 20px; border-radius: 10px; background: #0067c0; color: #fff; text-align: center; font-size: 12px; }

  .dialog { position: absolute; left: 514px; top: 145px; width: 1040px; background: #f0f0f0; color: #000; border-radius: 9px; overflow: hidden; box-shadow: 0 10px 40px rgba(0, 0, 0, .5); font: 13px/16px "Liberation Sans", sans-serif; z-index: 2; }
  .dtitle { display: flex; align-items: center; height: 37px; padding: 0 15px 0 10px; background: #f0f3fb; font: 14px/20px "Open Sans", sans-serif; }
  .dtitle h1 { flex: 1; font: inherit; margin: 0 0 0 6px; }
  .dicon { width: 18px; height: 19px; display: grid; place-items: center; background: #fbe6dc; }
  .dmain { display: grid; grid-template-columns: 398fr 232fr 352fr; gap: 14px; padding: 12px 14px 0 16px; }
  .tabs { display: flex; align-items: flex-end; height: 23px; padding-right: 1px; }
  .tabs button { height: 21px; width: 57px; background: #f3f3f3; border: 1px solid #e2e2e2; border-bottom: 0; }
  .tabs .on { height: 24px; width: 51px; margin-bottom: -1px; background: #f9f9f9; padding-bottom: 3px; position: relative; z-index: 1; }
  .tabpane { display: flex; flex-direction: column; gap: 8px; padding: 7px 13px 13px 11px; background: #f9f9f9; border: 1px solid #e2e2e2; }
  fieldset { margin: 0; min-width: 0; padding: 0 8px 0 11px; border: 1px solid #dcdcdc; }
  legend { padding: 0 3px; margin-left: -5px; line-height: 16px; }
  .f-type { display: grid; grid-template-columns: 150px 1fr; grid-template-rows: 36px 37px 35px 40px 35px; align-items: center; padding-top: 2px; padding-bottom: 6px; }
  .f-type label, .lab { padding-top: 4px; }
  .f-type .off { padding-top: 2px; }
  .f-type div { display: flex; gap: 1px; align-items: center; }
  .f-type .wide { gap: 4px; }
  .off { color: #9b9b9b; }
  .sel { display: inline-grid; align-items: center; height: 24px; }
  .sel select { grid-area: 1 / 1; width: 100%; height: 100%; appearance: none; border: 1px solid #d0d0d0; border-bottom-color: #b9b9b9; border-radius: 2px; background: #fff; padding: 0 20px 0 3px; }
  .sel select:disabled { border-color: #e6e6e6; background: #fafafa; color: #888; opacity: 1; }
  .sel svg { grid-area: 1 / 1; justify-self: end; margin-right: 5px; pointer-events: none; position: relative; }
  .tall { height: 26px; }
  .ind select { padding-left: 7px; }
  .combo select { border-color: #858585; padding-left: 2px; }
  .w144 { width: 144px; } .w50 { width: 50px; } .w124 { width: 124px; } .w160 { width: 160px; } .w196 { width: 196px; }
  .w84 { width: 84px; } .w36 { width: 36px; text-align: center; } .w114 { width: 114px; } .w110 { width: 110px; }
  .chipwrap { position: relative; display: flex; }
  .chip { position: absolute; left: 5px; top: 5px; width: 15px; height: 15px; border: 1px solid #000; background: #fff; z-index: 1; pointer-events: none; }
  .black { background: #000; }
  .chipped select { padding-left: 23px; }
  .dots { width: 24px; height: 26px; border: 1px solid #d0d0d0; border-radius: 4px; background: #fdfdfd; }
  .short { height: 22px; border-color: #e6e6e6; color: #888; }
  .swatch { display: flex; padding: 2px; border: 2px solid #999; border-right-color: #fff; border-bottom-color: #fff; background: #fff; }
  .f-angle { display: grid; grid-template-columns: 150px 1fr; grid-template-rows: 20px 30px 50px 26px 46px; align-items: center; padding-top: 11px; padding-bottom: 2px; }
  .f-angle > div { display: flex; }
  .f-angle > label { padding-left: 1px; }
  .f-angle > .check { padding-left: 0; }
  .f-angle > .low4 { padding: 4px 0 0; }
  .check { display: flex; align-items: center; gap: 3px; }
  input[type="checkbox"], input[type="radio"] { appearance: none; flex: none; width: 16px; height: 16px; border: 1px solid #5f5f5f; background: #f4f4f4; border-radius: 3px; display: grid; place-items: center; }
  input[type="radio"] { border-radius: 50%; }
  input[type="checkbox"]:disabled { border-color: #bdbdbd; }
  .check.off { color: #767676; }
  input[type="checkbox"]:checked { background: #005fb8; border-color: #005fb8; }
  input[type="checkbox"]:checked::before { content: ""; width: 8px; height: 4px; border: solid #fff; border-width: 0 0 1px 1px; transform: translateY(-1px) rotate(-45deg); }
  input[type="radio"]:checked { border: 5px solid #005fb8; background: #fff; }
  .text { height: 24px; border: 1px solid #e8e8e8; border-bottom-color: #7c7c7c; background: #fff; padding: 0 3px; }
  .text:disabled { border-color: #e6e6e6; background: #fafafa; color: #888; }
  .f-origin { padding-top: 10px; padding-bottom: 1px; margin-right: 2px; }
  .r28 { height: 28px; display: flex; align-items: center; }
  .r32 { height: 32px; }
  .r36 { height: 36px; display: flex; align-items: center; }
  .sub-or { display: flex; justify-content: space-between; align-items: center; padding: 0 39px 0 28px; }
  .sub-or .r36 { gap: 9px; }
  .ind40 { padding-left: 40px; }
  .brick { flex: none; margin-top: 12px; }
  .ibtn { width: 30px; height: 30px; flex: none; display: grid; place-items: center; border: 1px solid #cfcfcf; border-radius: 4px; background: #fdfdfd; }
  .ibtn:disabled { border-color: #e6e6e6; background: #fafafa; }
  .focus { border-color: #0078d4; }
  .mid fieldset { padding-left: 13px; }
  .mid legend { margin-left: -8px; }
  .f-bound { padding-top: 4px; padding-bottom: 8px; display: grid; grid-template-rows: 44px 44px 44px 46px 46px; }
  .f-bound > div, .inherit { display: flex; align-items: center; gap: 17px; margin-left: -1px; }
  .f-opt { margin-top: 9px; padding-top: 8px; padding-bottom: 4px; display: grid; grid-template-rows: repeat(7, 28px) 30px 28px 48px; align-items: center; }
  .low { align-self: end; padding-bottom: 1px; }
  .range { display: flex; align-items: center; gap: 14px; }
  input[type="range"] { appearance: none; width: 144px; height: 20px; background: none; }
  input[type="range"]::-webkit-slider-runnable-track { height: 5px; border: 1px solid #d3d3d3; background: #e6e9ea; }
  input[type="range"]::-webkit-slider-thumb { appearance: none; width: 10px; height: 19px; margin-top: -8px; background: #0078d7; }
  .mid .inherit { height: 54px; margin-left: 13px; }
  .right { display: flex; flex-direction: column; gap: 10px; }
  .right fieldset { padding-left: 15px; }
  .right legend { margin-left: -10px; }
  .right .f-isl { padding-top: 8px; padding-bottom: 8px; }
  .isl { display: grid; grid-template-columns: 112px 112px 1fr; padding-top: 6px; }
  .isl svg { display: block; }
  .isl .check { height: 26px; }
  .right .f-ret { position: relative; padding-top: 8px; padding-bottom: 5px; }
  .tip { position: absolute; left: 184px; top: 68px; width: 64px; height: 26px; padding-left: 5px; border: 1px solid #444; background: #fff; font: 14px/22px "Open Sans", sans-serif; z-index: 1; }
  .right .f-one { padding-top: 2px; padding-bottom: 3px; }
  .new { width: 32px; margin: 0 15px 0 17px; }
  .units { padding-left: 17px; }
  .right .f-inh { padding: 6px 8px 5px 11px; }
  .right .f-inh legend { margin-left: -6px; }
  .dfoot { display: flex; align-items: center; gap: 14px; padding: 14px 18px 13px 17px; }
  .dfoot button { width: 98px; height: 26px; border: 1px solid #d0d0d0; border-radius: 4px; background: #fdfdfd; }
  .dfoot button:disabled { border-color: #e6e6e6; background: #f9f9f9; color: #888; }
  .dfoot .less { width: 27px; margin: 0 0 4px -2px; border: 0; border-radius: 0; background: none; display: grid; place-items: center; }
</style>
